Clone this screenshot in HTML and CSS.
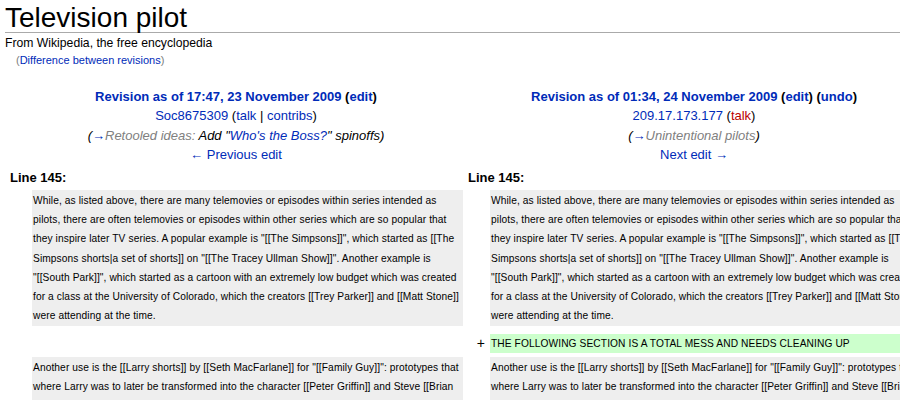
FILE: index.html
```
<!DOCTYPE html>
<html>
<head>
<meta charset="utf-8">
<title>Television pilot - Difference between revisions</title>
<link rel="stylesheet" href="styles.css">
</head>
<body>
<div class="content">
  <h1 class="first-heading">Television pilot</h1>
  <div class="site-sub">From Wikipedia, the free encyclopedia</div>
  <div class="content-sub">(<a href="#">Difference between revisions</a>)</div>

  <table class="diff">
    <colgroup>
      <col class="col-marker">
      <col class="col-content">
      <col class="col-marker">
      <col class="col-content">
    </colgroup>
    <tr class="diff-title">
      <td colspan="2" class="diff-otitle">
        <div><strong><a href="#">Revision as of 17:47, 23 November 2009</a> <span class="action">(<a href="#">edit</a>)</span></strong></div>
        <div><a href="#">Soc8675309</a> (<a href="#">talk</a> | <a href="#">contribs</a>)</div>
        <div><span class="comment">(<span class="autocomment"><a href="#">→</a>Retooled ideas:</span> Add "<a href="#">Who's the Boss?</a>" spinoffs)</span></div>
        <div><a href="#">← Previous edit</a></div>
      </td>
      <td colspan="2" class="diff-ntitle">
        <div><strong><a href="#">Revision as of 01:34, 24 November 2009</a> <span class="action">(<a href="#">edit</a>)</span> <span class="action">(<a href="#">undo</a>)</span></strong></div>
        <div><a href="#">209.17.173.177</a> (<a href="#" class="new">talk</a>)</div>
        <div><span class="comment">(<span class="autocomment"><a href="#">→</a>Unintentional pilots</span>)</span></div>
        <div><a href="#">Next edit →</a></div>
      </td>
    </tr>
    <tr>
      <td colspan="2" class="diff-lineno">Line 145:</td>
      <td colspan="2" class="diff-lineno">Line 145:</td>
    </tr>
    <tr>
      <td class="diff-marker"></td>
      <td class="diff-context"><div>While, as listed above, there are many telemovies or episodes within series intended as pilots, there are often telemovies or episodes within other series which are so popular that they inspire later TV series. A popular example is "&#8288;[[The Simpsons]]", which started as [[The Simpsons shorts|a set of shorts]] on "&#8288;[[The Tracey Ullman Show]]". Another example is "&#8288;[[South Park]]", which started as a cartoon with an extremely low budget which was created for a class at the University of Colorado, which the creators [[Trey Parker]] and [[Matt Stone]] were attending at the time.</div></td>
      <td class="diff-marker"></td>
      <td class="diff-context"><div>While, as listed above, there are many telemovies or episodes within series intended as pilots, there are often telemovies or episodes within other series which are so popular that they inspire later TV series. A popular example is "&#8288;[[The Simpsons]]", which started as [[The Simpsons shorts|a set of shorts]] on "&#8288;[[The Tracey Ullman Show]]". Another example is "&#8288;[[South Park]]", which started as a cartoon with an extremely low budget which was created for a class at the University of Colorado, which the creators [[Trey Parker]] and [[Matt Stone]] were attending at the time.</div></td>
    </tr>
    <tr class="diff-empty">
      <td class="diff-marker"></td>
      <td></td>
      <td class="diff-marker"></td>
      <td></td>
    </tr>
    <tr>
      <td colspan="2"></td>
      <td class="diff-marker">+</td>
      <td class="diff-addedline"><div>THE FOLLOWING SECTION IS A TOTAL MESS AND NEEDS CLEANING UP</div></td>
    </tr>
    <tr>
      <td class="diff-marker"></td>
      <td class="diff-context"><div>Another use is the [[Larry shorts]] by [[Seth MacFarlane]] for "&#8288;[[Family Guy]]": prototypes that where Larry was to later be transformed into the character [[Peter Griffin]] and Steve [[Brian Griffin]] respectively.</div></td>
      <td class="diff-marker"></td>
      <td class="diff-context"><div>Another use is the [[Larry shorts]] by [[Seth MacFarlane]] for "&#8288;[[Family Guy]]": prototypes that where Larry was to later be transformed into the character [[Peter Griffin]] and Steve [[Brian Griffin]] respectively.</div></td>
    </tr>
  </table>
</div>
</body>
</html>
```
FILE: styles.css
```
html, body {
  margin: 0;
  padding: 0;
  overflow: hidden;
  background: #fff;
}

body {
  font-family: "Liberation Sans", Arial, sans-serif;
  color: #000;
  width: 900px;
  height: 400px;
}

a {
  color: #002bb8;
  text-decoration: none;
}

a.new {
  color: #ba0000;
}

.content {
  padding-left: 5px;
  width: 930px;
}

.first-heading {
  margin: 0;
  padding-top: 3px;
  font-size: 28px;
  font-weight: normal;
  line-height: 29px;
  border-bottom: 1px solid #aaa;
}

.site-sub {
  margin-top: 2px;
  font-size: 12.2px;
  line-height: 16px;
}

.content-sub {
  margin-top: 1px;
  padding-left: 11px;
  font-size: 11px;
  line-height: 16px;
  color: #7d7d7d;
}

.diff {
  margin-top: 15px;
  width: 920px;
  table-layout: fixed;
  border-collapse: separate;
  border-spacing: 4px;
}

.col-marker {
  width: 19px;
}

.col-content {
  width: 431px;
}

.diff td {
  padding: 0;
  vertical-align: top;
}

.diff-otitle,
.diff-ntitle {
  text-align: center;
  font-size: 13px;
  line-height: 19.4px;
}

.comment {
  font-style: italic;
}

.autocomment {
  color: #808080;
}

.diff td.diff-lineno {
  font-weight: bold;
  font-size: 13px;
  line-height: 17px;
  padding-left: 1px;
}

.diff td.diff-marker {
  text-align: right;
  font-size: 14px;
  line-height: 19px;
  padding-right: 1px;
}

.diff-context {
  background: #eee;
}

.diff-addedline {
  background: #cfc;
}

.diff-context div,
.diff-addedline div {
  font-size: 10.2px;
  line-height: 19.3px;
  padding-left: 1px;
  letter-spacing: 0.1px;
}

.diff-addedline div {
  line-height: 19px;
}

.diff-context div {
  padding-top: 1px;
}

.diff-empty td {
  height: 0;
}
```
